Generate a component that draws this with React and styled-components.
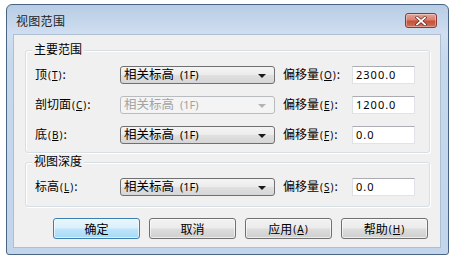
import React from "react";
import styled, { createGlobalStyle, css } from "styled-components";

const Global = createGlobalStyle`
  html, body { margin: 0; padding: 0; background: #ffffff; }
  body { font-family: "Noto Sans CJK SC", "Noto Sans", sans-serif; font-size: 12px; color: #000; }
`;

const Window = styled.div`
  box-sizing: border-box;
  margin: 4px 0 0 6px;
  width: 443px;
  height: 251px;
  border: 1px solid #4a6584;
  border-radius: 6px 6px 3px 3px;
  background: linear-gradient(180deg, #b7cce5 0px, #c3d5ea 14px, #d0def0 29px, #c6d8ec 60px, #c2d5eb 100%);
  padding: 0 7px 6px 6px;
  display: flex;
  flex-direction: column;
`;

const TitleBar = styled.div`
  height: 29px;
  display: flex;
  justify-content: space-between;
  align-items: flex-start;
`;

const Title = styled.div`
  margin: 9px 0 0 3px;
  font-size: 12px;
  line-height: 14px;
  color: #1e1e1e;
  letter-spacing: 0.3px;
`;

const CloseBtn = styled.div`
  box-sizing: border-box;
  margin: 8px 4px 0 0;
  width: 32px;
  height: 15px;
  border: 1px solid #8a3a32;
  border-radius: 3px;
  background: linear-gradient(180deg, #e7a395 0%, #d98070 45%, #c4503c 55%, #d36e55 100%);
  display: flex;
  align-items: center;
  justify-content: center;
  box-shadow: inset 0 0 0 1px rgba(255, 255, 255, 0.35);
`;

const Client = styled.div`
  box-sizing: border-box;
  flex: 1;
  background: #f0f0f0;
  border: 1px solid #aebfd3;
  padding: 15px 10px 0 11px;
  display: flex;
  flex-direction: column;
`;

const Group = styled.div`
  position: relative;
  box-sizing: border-box;
  border: 1px solid #d5dfe5;
  box-shadow: inset 1px 1px 0 #ffffff, 1px 1px 0 #ffffff;
  border-radius: 3px;
  padding: ${(p) => p.$pad};
  margin-bottom: ${(p) => p.$mb}px;
  display: grid;
  grid-template-columns: 85px 155px 77px 63px;
  column-gap: 0;
  row-gap: 11px;
  align-items: center;
`;

const Legend = styled.div`
  position: absolute;
  top: -9px;
  left: 6px;
  padding: 0 2px;
  background: #f0f0f0;
  font-size: 12px;
  line-height: 14px;
`;

const Label = styled.div`
  font-size: 12px;
  line-height: 18px;
  white-space: nowrap;
  ${(p) => p.$offset && css`padding-left: 8px;`}
`;

const Mn = styled.span`
  font-family: "Noto Sans", sans-serif;
  font-size: 10px;
  text-decoration: underline;
  text-underline-offset: 1px;
`;

const Paren = styled.span`
  font-family: "Noto Sans", sans-serif;
  font-size: 10px;
  margin: 0 1px;
`;

const Combo = styled.div`
  box-sizing: border-box;
  height: 18px;
  border: 1px solid ${(p) => (p.$disabled ? "#b9bcbf" : "#707070")};
  border-radius: 3px;
  background: ${(p) =>
    p.$disabled
      ? "#f4f4f4"
      : "linear-gradient(180deg, #f4f4f4 0%, #ececec 48%, #e0e0e0 52%, #d6d6d6 100%)"};
  color: ${(p) => (p.$disabled ? "#a3a3a3" : "#000")};
  display: flex;
  align-items: center;
  justify-content: space-between;
  padding: 0 8px 0 3px;
  font-size: 12.5px;
  white-space: nowrap;
`;

const ComboText = styled.span`
  line-height: 16px;
`;

const Small = styled.span`
  font-family: "Noto Sans", sans-serif;
  font-size: 11px;
  margin-left: 6px;
`;

const Arrow = styled.span`
  width: 0;
  height: 0;
  border-left: 4px solid transparent;
  border-right: 4px solid transparent;
  border-top: 4px solid ${(p) => (p.$disabled ? "#b3b3b3" : "#1a1a1a")};
  margin-top: 2px;
`;

const Field = styled.div`
  box-sizing: border-box;
  height: 18px;
  background: #fff;
  border: 1px solid #e2e3ea;
  border-top-color: #abadb3;
  border-left-color: #dbdfe6;
  padding-left: 3px;
  font-family: "Noto Sans", sans-serif;
  font-size: 11px;
  letter-spacing: 1px;
  line-height: 16px;
`;

const Buttons = styled.div`
  display: flex;
  justify-content: flex-end;
  gap: 9px;
  padding-right: 2px;
`;

const Button = styled.div`
  box-sizing: border-box;
  width: 87px;
  height: 21px;
  border-radius: 3px;
  display: flex;
  align-items: center;
  justify-content: center;
  font-size: 12px;
  border: 1px solid ${(p) => (p.$primary ? "#3c7fb1" : "#707070")};
  background: ${(p) =>
    p.$primary
      ? "linear-gradient(180deg, #eaf6fd 0%, #d9f0fc 48%, #bee6fd 52%, #a7d9f5 100%)"
      : "linear-gradient(180deg, #f2f2f2 0%, #ebebeb 48%, #dddddd 52%, #cfcfcf 100%)"};
  box-shadow: inset 0 0 0 1px rgba(255, 255, 255, 0.6);
`;

const Lbl = ({ name, k }) => (
  <>
    {name}
    <Paren>(</Paren>
    <Mn>{k}</Mn>
    <Paren>)</Paren>:
  </>
);

const rows1 = [
  { name: "顶", k: "T", off: "O", val: "2300.0" },
  { name: "剖切面", k: "C", off: "E", val: "1200.0", disabled: true },
  { name: "底", k: "B", off: "F", val: "0.0" },
];

const Row = ({ r }) => (
  <>
    <Label>
      <Lbl name={r.name} k={r.k} />
    </Label>
    <Combo $disabled={r.disabled}>
      <ComboText>
        相关标高<Small>(1F)</Small>
      </ComboText>
      <Arrow $disabled={r.disabled} />
    </Combo>
    <Label $offset>
      <Lbl name="偏移量" k={r.off} />
    </Label>
    <Field>{r.val}</Field>
  </>
);

export default function App() {
  return (
    <>
      <Global />
      <Window>
        <TitleBar>
          <Title>视图范围</Title>
          <CloseBtn>
            <svg width="12" height="10" viewBox="0 0 12 10">
              <path d="M2 1.5 L10 8.5 M10 1.5 L2 8.5" stroke="#5a1f18" strokeWidth="3" strokeLinecap="square" />
              <path d="M2 1.5 L10 8.5 M10 1.5 L2 8.5" stroke="#ffffff" strokeWidth="1.8" strokeLinecap="square" />
            </svg>
          </CloseBtn>
        </TitleBar>
        <Client>
          <Group $pad="14px 0 8px 9px" $mb={9}>
            <Legend>主要范围</Legend>
            {rows1.map((r) => (
              <Row key={r.name} r={r} />
            ))}
          </Group>
          <Group $pad="14px 0 10px 9px" $mb={11}>
            <Legend>视图深度</Legend>
            <Row r={{ name: "标高", k: "L", off: "S", val: "0.0" }} />
          </Group>
          <Buttons>
            <Button $primary>确定</Button>
            <Button>取消</Button>
            <Button>
              应用<Paren>(</Paren><Mn>A</Mn><Paren>)</Paren>
            </Button>
            <Button>
              帮助<Paren>(</Paren><Mn>H</Mn><Paren>)</Paren>
            </Button>
          </Buttons>
        </Client>
      </Window>
    </>
  );
}
